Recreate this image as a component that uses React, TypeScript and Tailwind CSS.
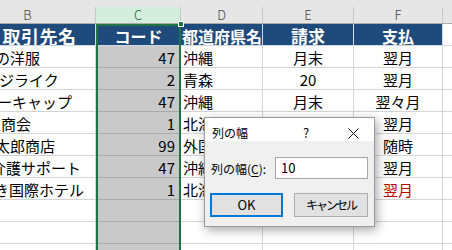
import React from "react";

type Row = {
  b: string;
  bpl: string;
  c: string;
  d: string;
  e: string;
  f: string;
  red?: boolean;
};

const rows: Row[] = [
  { b: "の洋服", bpl: "pl-[35px]", c: "47", d: "沖縄", e: "月末", f: "翌月" },
  { b: "ジライク", bpl: "pl-[39px]", c: "2", d: "青森", e: "20", f: "翌月" },
  { b: "ーキャップ", bpl: "pl-[37px]", c: "47", d: "沖縄", e: "月末", f: "翌々月" },
  { b: "屋商会", bpl: "pl-[26px]", c: "1", d: "北海道", e: "", f: "翌月" },
  { b: "太郎商店", bpl: "pl-[35px]", c: "99", d: "外国", e: "", f: "随時" },
  { b: "介護サポート", bpl: "pl-[31px]", c: "47", d: "沖縄", e: "", f: "翌月" },
  { b: "き国際ホテル", bpl: "pl-[34px]", c: "1", d: "北海道", e: "", f: "翌月", red: true },
  { b: "", bpl: "", c: "", d: "", e: "", f: "" },
  { b: "", bpl: "", c: "", d: "", e: "", f: "" },
  { b: "", bpl: "", c: "", d: "", e: "", f: "" },
];

const grid = "border-r border-b border-[#d4d4d4]";

export default function App() {
  return (
    <div className="relative w-[452px] h-[250px] overflow-hidden bg-white font-['Noto_Sans_CJK_JP','Noto_Sans',sans-serif] text-black">
      <div className="ml-[-40px] w-[540px]">
        {/* top strip */}
        <div className="h-[7px] bg-[#e6e6e6]" />
        {/* column headers */}
        <div className="flex h-[17px] bg-[#e6e6e6] border-b border-[#ababab] text-[13px] leading-[16px] font-light text-[#444]">
          <div className="w-[136px] shrink-0 border-r border-[#c8c8c8] text-center">B</div>
          <div className="w-[85px] shrink-0 border-r border-[#c8c8c8] bg-[#d3eedd] text-center text-[#2b5d3f]">C</div>
          <div className="w-[82px] shrink-0 border-r border-[#c8c8c8] text-center">D</div>
          <div className="w-[91px] shrink-0 border-r border-[#c8c8c8] text-center">E</div>
          <div className="w-[89px] shrink-0 border-r border-[#c8c8c8] text-center">F</div>
          <div className="w-[60px] shrink-0 border-r border-[#c8c8c8]" />
        </div>
        {/* blue title row */}
        <div className="flex h-[22px] font-bold text-white text-[16px] leading-[20px]">
          <div className="w-[136px] shrink-0 bg-[#1f4a7c] border-r border-b border-[#d0d8e4] flex items-center justify-center pt-[2px] pl-[24px] overflow-hidden whitespace-nowrap">
            <span className="text-[18px] tracking-[0.5px]">取引先名</span>
          </div>
          <div className="w-[85px] shrink-0 bg-[#1f4a7c] border-b border-[#d0d8e4] flex items-center justify-center pt-[2px]">コード</div>
          <div className="w-[82px] shrink-0 bg-[#1f4a7c] border-r border-b border-[#d0d8e4] flex items-center pt-[2px] pl-[1px] whitespace-nowrap">都道府県名</div>
          <div className="w-[91px] shrink-0 bg-[#1f4a7c] border-r border-b border-[#d0d8e4] flex items-center justify-center pt-[2px] text-[17px]">請求</div>
          <div className="w-[89px] shrink-0 bg-[#1f4a7c] border-r border-b border-[#d0d8e4] flex items-center justify-center pt-[2px]">支払</div>
          <div className={`w-[60px] shrink-0 ${grid}`} />
        </div>
        {/* data rows */}
        {rows.map((r, i) => (
          <div key={i} className="flex h-[22px] text-[15px] leading-[20px]">
            <div className={`w-[136px] shrink-0 overflow-hidden whitespace-nowrap flex items-center pt-[2px] ${grid} ${r.bpl}`}>
              {r.b}
            </div>
            <div className="w-[85px] shrink-0 bg-[#c9c9c9] border-b border-[#ababab] flex items-center justify-end pt-[2px] pr-[6px]">
              {r.c}
            </div>
            <div className={`w-[82px] shrink-0 overflow-hidden whitespace-nowrap flex items-center pt-[2px] pl-[2px] ${grid}`}>
              {r.d}
            </div>
            <div className={`w-[91px] shrink-0 flex items-center justify-center pt-[2px] ${grid}`}>{r.e}</div>
            <div className={`w-[89px] shrink-0 flex items-center justify-center pt-[2px] ${grid} ${r.red ? "text-[#c00000]" : ""}`}>
              {r.f}
            </div>
            <div className={`w-[60px] shrink-0 ${grid}`} />
          </div>
        ))}
      </div>

      {/* selection border */}
      <div className="absolute left-[96px] top-[24px] w-[85px] h-[240px] border-2 border-[#217346]" />
      <div className="absolute left-[178px] top-[21px] w-[6px] h-[6px] bg-[#217346] border border-white" />

      {/* dialog */}
      <div className="absolute left-[204px] top-[117px] w-[171px] h-[110px] border border-[#9a9a9a] bg-[#f0f0f0] shadow-[2px_3px_10px_rgba(0,0,0,0.35)] flex flex-col text-[12px] leading-[16px]">
        <div className="h-[23px] bg-white flex items-center pt-[7px] pl-[7px] pr-[15px]">
          <span>列の幅</span>
          <span className="ml-[55px] text-[13px]">?</span>
          <svg className="ml-auto" width="11" height="11" viewBox="0 0 11 11">
            <line x1="0.5" y1="0.5" x2="10.5" y2="10.5" stroke="#111" strokeWidth="1" />
            <line x1="10.5" y1="0.5" x2="0.5" y2="10.5" stroke="#111" strokeWidth="1" />
          </svg>
        </div>
        <div className="flex flex-col pl-[5px] pr-[6px] pt-[16px]">
          <div className="flex items-center h-[22px]">
            <span className="ml-[1px] pt-[1px]">
              列の幅(<span className="underline underline-offset-2">C</span>):
            </span>
            <div className="ml-auto w-[93px] h-[22px] bg-white border border-[#a5a5a5] flex items-center pl-[5px] text-[13px]">
              10
            </div>
          </div>
          <div className="flex justify-between mt-[14px]">
            <div className="w-[73px] h-[24px] bg-[#e1e1e1] border-2 border-[#0078d7] flex items-center justify-center text-[13px]">
              OK
            </div>
            <div className="w-[74px] h-[24px] bg-[#e1e1e1] border border-[#adadad] flex items-center justify-center text-[12px] tracking-[-2px]">
              キャンセル
            </div>
          </div>
        </div>
      </div>
    </div>
  );
}
